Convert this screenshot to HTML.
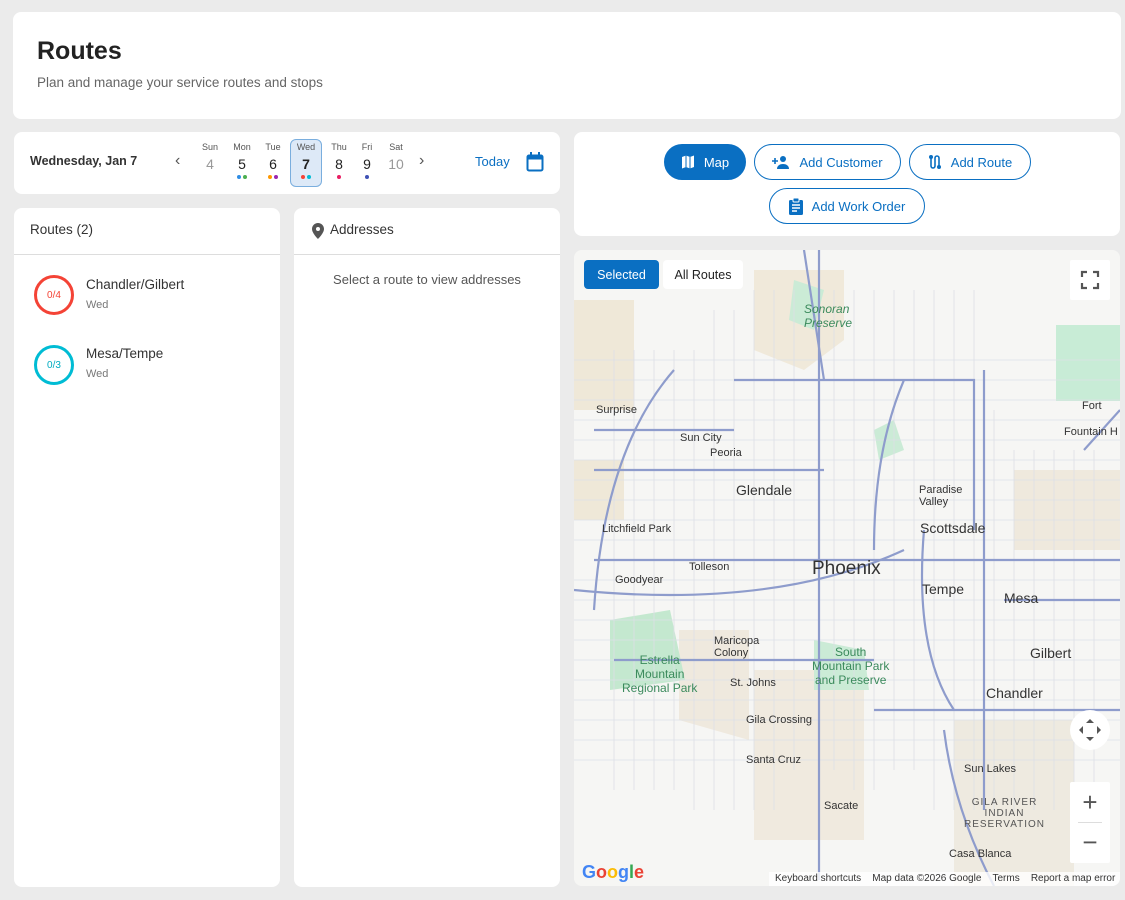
<!DOCTYPE html>
<html><head><meta charset="utf-8"><style>
*{box-sizing:border-box;margin:0;padding:0}
body{width:1125px;height:900px;background:#ebebeb;font-family:"Liberation Sans",sans-serif;color:#222;position:relative;overflow:hidden}
.card{position:absolute;background:#fff;border-radius:8px}
.btn{position:absolute;height:36px;border:1px solid #0a6fc2;border-radius:18px;color:#0a6fc2;font-size:13px;display:flex;align-items:center;justify-content:center;gap:9px;background:#fff}
.day{position:absolute;top:142px;width:30px;text-align:center}
.day .n{font-size:9px;color:#555}
.day .d{font-size:14px;margin-top:4px}
.dots{display:flex;justify-content:center;gap:2px;margin-top:3px;height:5px}
.dots i{width:4px;height:4px;border-radius:2px;display:block}
.ml{position:absolute;font-size:11px;color:#333}
</style></head><body>
<div class="card" style="left:13px;top:12px;width:1108px;height:107px">
<div style="position:absolute;left:24px;top:25px;font-size:25px;font-weight:bold;color:#222">Routes</div>
<div style="position:absolute;left:24px;top:63px;font-size:13.5px;color:#666">Plan and manage your service routes and stops</div>
</div>
<div class="card" style="left:14px;top:132px;width:546px;height:62px">
<div style="position:absolute;left:16px;top:22px;font-size:12.5px;font-weight:bold;color:#333">Wednesday, Jan 7</div>
<div style="position:absolute;left:161px;top:20px;font-size:16px;color:#555">‹</div>
<div style="position:absolute;left:405px;top:20px;font-size:16px;color:#555">›</div>
<div style="position:absolute;left:461px;top:22px;font-size:13px;color:#0a6fc2">Today</div>
<svg style="position:absolute;left:512px;top:20px" width="18" height="20" viewBox="0 0 18 20"><rect x="1.5" y="3.5" width="15" height="15" rx="1.5" fill="none" stroke="#0a6fc2" stroke-width="2"/><rect x="1.5" y="3.5" width="15" height="4" fill="#0a6fc2"/><rect x="4" y="0" width="2" height="4" fill="#0a6fc2"/><rect x="12" y="0" width="2" height="4" fill="#0a6fc2"/></svg>
</div>
<div style="position:absolute;left:290px;top:139px;width:32px;height:48px;border:1px solid #7aaede;background:#dde9f7;border-radius:6px"></div>
<div class="day" style="left:195px"><div class="n">Sun</div><div class="d" style="color:#999">4</div><div class="dots"></div></div>
<div class="day" style="left:227px"><div class="n">Mon</div><div class="d">5</div><div class="dots"><i style="background:#2f8de4"></i><i style="background:#4caf50"></i></div></div>
<div class="day" style="left:258px"><div class="n">Tue</div><div class="d">6</div><div class="dots"><i style="background:#ff9800"></i><i style="background:#9c27b0"></i></div></div>
<div class="day" style="left:291px"><div class="n">Wed</div><div class="d" style="font-weight:bold">7</div><div class="dots"><i style="background:#f44336"></i><i style="background:#00bcd4"></i></div></div>
<div class="day" style="left:324px"><div class="n">Thu</div><div class="d">8</div><div class="dots"><i style="background:#e91e63"></i></div></div>
<div class="day" style="left:352px"><div class="n">Fri</div><div class="d">9</div><div class="dots"><i style="background:#3f51b5"></i></div></div>
<div class="day" style="left:381px"><div class="n">Sat</div><div class="d" style="color:#999">10</div><div class="dots"></div></div>

<div class="card" style="left:14px;top:208px;width:266px;height:679px">
<div style="position:absolute;left:16px;top:14px;font-size:13.5px;color:#333">Routes (2)</div>
<div style="position:absolute;left:0;top:46px;width:100%;height:1px;background:#ddd"></div>
<div style="position:absolute;left:20px;top:67px;width:40px;height:40px;border:3px solid #f44336;border-radius:50%;color:#f44336;font-size:10px;display:flex;align-items:center;justify-content:center">0/4</div>
<div style="position:absolute;left:72px;top:69px;font-size:13.5px;color:#333">Chandler/Gilbert</div>
<div style="position:absolute;left:72px;top:91px;font-size:11px;color:#777">Wed</div>
<div style="position:absolute;left:20px;top:137px;width:40px;height:40px;border:3px solid #00bcd4;border-radius:50%;color:#00acc1;font-size:10px;display:flex;align-items:center;justify-content:center">0/3</div>
<div style="position:absolute;left:72px;top:138px;font-size:13.5px;color:#333">Mesa/Tempe</div>
<div style="position:absolute;left:72px;top:160px;font-size:11px;color:#777">Wed</div>
</div>
<div class="card" style="left:294px;top:208px;width:266px;height:679px">
<svg style="position:absolute;left:18px;top:15px" width="12" height="16" viewBox="0 0 12 16"><path d="M6 0C2.7 0 0 2.6 0 5.9 0 10.3 6 16 6 16s6-5.7 6-10.1C12 2.6 9.3 0 6 0zm0 8a2 2 0 110-4 2 2 0 010 4z" fill="#555"/></svg>
<div style="position:absolute;left:36px;top:14px;font-size:13.5px;color:#333">Addresses</div>
<div style="position:absolute;left:0;top:46px;width:100%;height:1px;background:#ddd"></div>
<div style="position:absolute;left:0;top:64px;width:100%;text-align:center;font-size:13px;color:#555">Select a route to view addresses</div>
</div>

<div class="card" style="left:574px;top:132px;width:546px;height:104px"></div>
<div class="btn" style="left:664px;top:144px;width:82px;background:#0a6fc2;color:#fff;border-color:#0a6fc2"><svg width="14" height="14" viewBox="0 0 14 14"><path d="M1 2l4-1.5 4 1.5 4-1.5v11.5l-4 1.5-4-1.5-4 1.5z" fill="#fff"/><path d="M5 .5v11.5M9 2v11.5" stroke="#0a6fc2" stroke-width="1"/></svg>Map</div>
<div class="btn" style="left:754px;top:144px;width:147px"><svg width="18" height="14" viewBox="0 0 18 14"><circle cx="11" cy="4" r="3" fill="#0a6fc2"/><path d="M5 14c0-3.5 3-5 6-5s6 1.5 6 5z" fill="#0a6fc2"/><path d="M0 6h6M3 3v6" stroke="#0a6fc2" stroke-width="1.6"/></svg>Add Customer</div>
<div class="btn" style="left:909px;top:144px;width:122px"><svg width="14" height="16" viewBox="0 0 14 16"><circle cx="3" cy="3" r="2" fill="#0a6fc2"/><circle cx="11" cy="13" r="2" fill="#0a6fc2"/><path d="M3 3v9a2 2 0 004 0V4a2 2 0 014 0v9" fill="none" stroke="#0a6fc2" stroke-width="1.6"/></svg>Add Route</div>
<div class="btn" style="left:769px;top:188px;width:156px"><svg width="14" height="17" viewBox="0 0 14 17"><rect x="0" y="2" width="14" height="15" rx="1.5" fill="#0a6fc2"/><rect x="4" y="0" width="6" height="4" rx="1" fill="#0a6fc2" stroke="#fff" stroke-width="1"/><path d="M3 7h8M3 10h8M3 13h5" stroke="#fff" stroke-width="1.4"/></svg>Add Work Order</div>

<div style="position:absolute;left:574px;top:250px;width:546px;height:636px;border-radius:8px;overflow:hidden;background:#f5f5f3">
<svg width="546" height="636" style="position:absolute;left:0;top:0">
<rect x="0" y="0" width="546" height="636" fill="#f6f6f4"/>
<path d="M180 20h90v70l-40 30-50-20z" fill="#f0e9da"/>
<path d="M0 50h60v110H0z" fill="#efe8d8"/>
<path d="M0 210h50v60H0z" fill="#efe8d8"/>
<path d="M105 380h70v110l-70-20z" fill="#efe9de"/>
<path d="M180 420h110v170H180z" fill="#f0eadf"/>
<path d="M380 470h120v166H380z" fill="#eeeae0"/>
<path d="M440 220h106v80H440z" fill="#efe9dd"/>
<path d="M482 75h64v76h-64z" fill="#c8ecd6"/>
<path d="M36 370l60-10 15 70-75 10z" fill="#c4e8cf"/>
<path d="M240 390l50 10 5 40-55 0z" fill="#cbebd6"/>
<path d="M220 30l30 10-10 40-25-10z" fill="#cbebd6"/>
<path d="M300 180l20-10 10 30-25 10z" fill="#cbebd6"/>
<g stroke="#dcdfe7" stroke-width="0.8">
<path d="M0 110H546M0 130H546M0 150H546M0 170H546M0 190H546M0 210H546M0 230H546M0 250H546M0 270H546M0 290H546M0 330H546M0 350H546M0 370H546M0 390H546M0 410H546M0 430H546M0 450H546M0 470H546M0 490H546M0 510H546"/>
<path d="M40 100V540M60 100V540M80 100V540M100 100V540M120 100V560M140 60V560M160 60V560M180 40V560M200 40V560M220 40V520M260 40V520M280 40V540M300 40V540M320 40V520M340 40V520M360 40V560M380 40V560M400 40V560M420 160V560M440 200V560M460 200V560M480 200V560M500 200V560M520 200V560"/>
</g>
<g stroke="#8e9ccc" stroke-width="2.2" fill="none">
<path d="M20 310H546"/><path d="M245 0V630"/><path d="M160 130H400V280"/><path d="M100 120Q30 200 20 360"/>
<path d="M300 460H546"/><path d="M350 280Q340 400 380 460"/><path d="M410 120V560"/><path d="M0 340Q200 360 330 300"/>
<path d="M370 480Q380 560 420 636"/><path d="M20 220H250"/><path d="M20 180H160"/><path d="M230 0L250 130"/><path d="M330 130Q300 200 300 300"/><path d="M40 410H300"/><path d="M510 200L546 160"/><path d="M430 350H546"/>
</g>
</svg>
<div class="ml" style="left:230px;top:52px;color:#3b8a5c;font-style:italic;font-size:12px">Sonoran<br>Preserve</div>
<div class="ml" style="left:22px;top:154px">Surprise</div>
<div class="ml" style="left:106px;top:182px">Sun City</div>
<div class="ml" style="left:136px;top:197px">Peoria</div>
<div class="ml" style="left:162px;top:232px;font-size:14px">Glendale</div>
<div class="ml" style="left:345px;top:234px">Paradise<br>Valley</div>
<div class="ml" style="left:346px;top:270px;font-size:14px">Scottsdale</div>
<div class="ml" style="left:28px;top:273px">Litchfield Park</div>
<div class="ml" style="left:115px;top:311px">Tolleson</div>
<div class="ml" style="left:41px;top:324px">Goodyear</div>
<div class="ml" style="left:238px;top:308px;font-size:19px">Phoenix</div>
<div class="ml" style="left:348px;top:331px;font-size:14px">Tempe</div>
<div class="ml" style="left:430px;top:340px;font-size:14px">Mesa</div>
<div class="ml" style="left:140px;top:385px">Maricopa<br>Colony</div>
<div class="ml" style="left:48px;top:403px;color:#3b8a5c;text-align:center;font-size:12px">Estrella<br>Mountain<br>Regional Park</div>
<div class="ml" style="left:238px;top:395px;color:#3b8a5c;text-align:center;font-size:12px">South<br>Mountain Park<br>and Preserve</div>
<div class="ml" style="left:456px;top:395px;font-size:14px">Gilbert</div>
<div class="ml" style="left:412px;top:435px;font-size:14px">Chandler</div>
<div class="ml" style="left:156px;top:427px">St. Johns</div>
<div class="ml" style="left:172px;top:464px">Gila Crossing</div>
<div class="ml" style="left:172px;top:504px">Santa Cruz</div>
<div class="ml" style="left:390px;top:513px">Sun Lakes</div>
<div class="ml" style="left:250px;top:550px">Sacate</div>
<div class="ml" style="left:390px;top:547px;font-size:10px;color:#555;text-align:center;letter-spacing:1px">GILA RIVER<br>INDIAN<br>RESERVATION</div>
<div class="ml" style="left:375px;top:598px">Casa Blanca</div>
<div class="ml" style="left:508px;top:150px">Fort</div>
<div class="ml" style="left:490px;top:176px">Fountain H</div>
<div style="position:absolute;left:10px;top:10px;width:75px;height:29px;background:#0a6fc2;color:#fff;border-radius:4px;font-size:12.5px;display:flex;align-items:center;justify-content:center">Selected</div>
<div style="position:absolute;left:89px;top:10px;width:80px;height:29px;background:#fff;color:#222;border-radius:4px;font-size:12.5px;display:flex;align-items:center;justify-content:center">All Routes</div>
<div style="position:absolute;left:496px;top:10px;width:40px;height:40px;background:#fff;border-radius:2px"><svg width="40" height="40"><path d="M12 17v-5h5M23 12h5v5M28 23v5h-5M17 28h-5v-5" stroke="#555" stroke-width="2.2" fill="none"/></svg></div>
<div style="position:absolute;left:496px;top:460px;width:40px;height:40px;background:#fff;border-radius:50%"><svg width="40" height="40"><path d="M20 9l-4 4h8zM20 31l-4-4h8zM9 20l4-4v8zM31 20l-4-4v8z" fill="#555"/></svg></div>
<div style="position:absolute;left:496px;top:532px;width:40px;height:81px;background:#fff;border-radius:2px"><div style="position:absolute;left:0;top:0;width:40px;height:40px;font-size:26px;color:#555;text-align:center;line-height:40px">+</div><div style="position:absolute;left:8px;top:40px;width:24px;height:1px;background:#ddd"></div><div style="position:absolute;left:0;top:41px;width:40px;height:40px;font-size:26px;color:#555;text-align:center;line-height:38px">−</div></div>
<div style="position:absolute;left:8px;top:612px;font-size:18px;font-weight:bold"><span style="color:#4285f4">G</span><span style="color:#ea4335">o</span><span style="color:#fbbc05">o</span><span style="color:#4285f4">g</span><span style="color:#34a853">l</span><span style="color:#ea4335">e</span></div>
<div style="position:absolute;left:195px;top:622px;width:351px;height:14px;background:rgba(255,255,255,.8);font-size:10px;color:#333;white-space:nowrap;padding-left:6px;line-height:14px">Keyboard shortcuts&nbsp;&nbsp;&nbsp;&nbsp;Map data ©2026 Google&nbsp;&nbsp;&nbsp;&nbsp;Terms&nbsp;&nbsp;&nbsp;&nbsp;Report a map error</div>
</div>
</body></html>
